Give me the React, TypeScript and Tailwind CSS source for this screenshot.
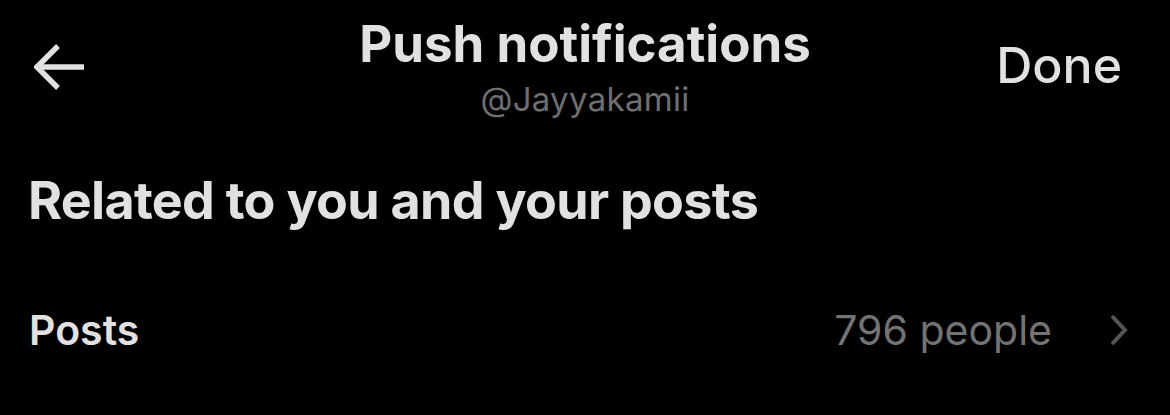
import React from "react";

export default function App() {
  return (
    <div className="w-[1170px] h-[415px] bg-black overflow-hidden text-[#e1e1e1]" style={{ fontFamily: "Inter, 'Noto Sans', sans-serif" }}>
      <div className="grid grid-cols-[1fr_auto_1fr] items-start pt-[14px]">
        <div className="pl-[34px] pt-[30px]">
          <svg width="52" height="46" viewBox="0 0 52 46" fill="none" stroke="#e1e1e1" strokeWidth="5.5" strokeLinecap="butt">
            <path d="M50 23H4" />
            <path d="M24 2L3 23l21 21" />
          </svg>
        </div>
        <div className="flex flex-col items-center">
          <div className="text-[51px] font-bold leading-[60px]">Push notifications</div>
          <div className="text-[33px] leading-[40px] text-[#6f6f6f] pt-[5px] tracking-[0.3px]">@Jayyakamii</div>
        </div>
        <div className="flex justify-end pr-[48px] pt-[21px]">
          <div className="text-[50px] font-medium leading-[60px]">Done</div>
        </div>
      </div>
      <div className="px-[28px] pt-[52px] text-[52px] font-bold leading-[60px] tracking-[-0.7px]">Related to you and your posts</div>
      <div className="flex items-center justify-between pl-[29px] pr-[42px] pt-[74px]">
        <div className="text-[41px] font-semibold leading-[50px]">Posts</div>
        <div className="flex items-center gap-[58px]">
          <div className="text-[41px] leading-[50px] text-[#737373]">796 people</div>
          <svg width="18" height="32" viewBox="0 0 18 32" fill="none" stroke="#555555" strokeWidth="4">
            <path d="M2 2l13 14-13 14" />
          </svg>
        </div>
      </div>
    </div>
  );
}
